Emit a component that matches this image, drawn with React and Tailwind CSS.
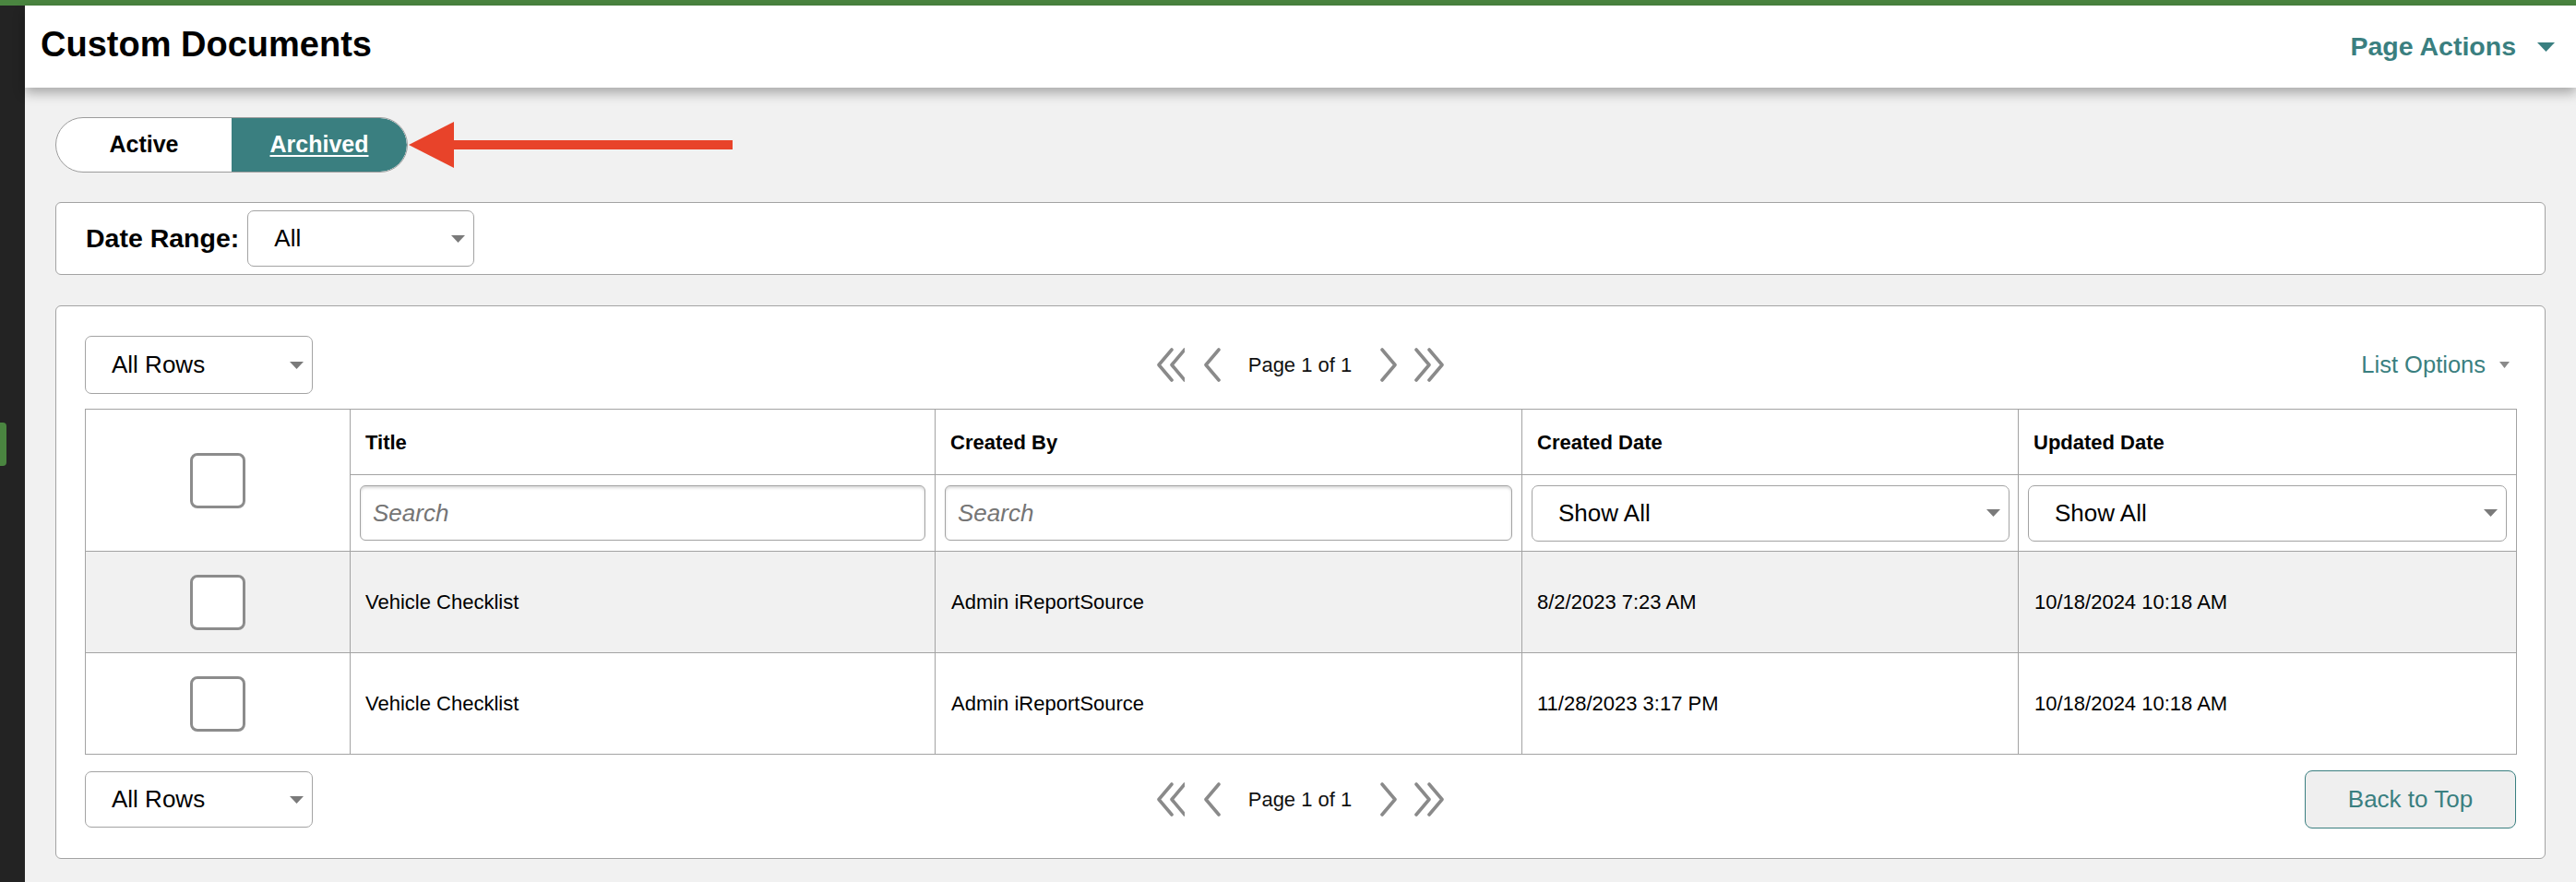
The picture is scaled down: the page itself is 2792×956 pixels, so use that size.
import React from "react";

function Caret() {
  return (
    <svg width="15" height="8" viewBox="0 0 15 8" className="shrink-0">
      <polygon points="0,0 15,0 7.5,8" fill="#7a7a7a" />
    </svg>
  );
}

function Select({ label, className }) {
  return (
    <div
      className={`flex items-center justify-between bg-white border border-[#a3a3a3] rounded-[7px] pl-[28px] pr-[9px] text-[26px] text-black ${className}`}
    >
      <span>{label}</span>
      <Caret />
    </div>
  );
}

function Checkbox() {
  return <div className="w-[60px] h-[60px] mx-auto bg-white border-[3px] border-[#8c8c8c] rounded-[8px]" />;
}

function ChevLeft() {
  return (
    <svg width="20" height="37" viewBox="0 0 20 37">
      <polyline points="17,2 3,18.5 17,35" fill="none" stroke="#8a8a8a" strokeWidth="3.6" strokeLinecap="round" strokeLinejoin="round" />
    </svg>
  );
}
function ChevRight() {
  return (
    <svg width="20" height="37" viewBox="0 0 20 37">
      <polyline points="3,2 17,18.5 3,35" fill="none" stroke="#8a8a8a" strokeWidth="3.6" strokeLinecap="round" strokeLinejoin="round" />
    </svg>
  );
}
function DblLeft() {
  return (
    <svg width="31" height="37" viewBox="0 0 31 37">
      <polyline points="17,2 3,18.5 17,35" fill="none" stroke="#8a8a8a" strokeWidth="3.6" strokeLinecap="round" strokeLinejoin="round" />
      <polyline points="31,2 17,18.5 31,35" fill="none" stroke="#8a8a8a" strokeWidth="3.6" strokeLinecap="round" strokeLinejoin="round" />
    </svg>
  );
}
function DblRight() {
  return (
    <svg width="33" height="37" viewBox="0 0 33 37">
      <polyline points="2,2 16,18.5 2,35" fill="none" stroke="#8a8a8a" strokeWidth="3.6" strokeLinecap="round" strokeLinejoin="round" />
      <polyline points="16,2 30,18.5 16,35" fill="none" stroke="#8a8a8a" strokeWidth="3.6" strokeLinecap="round" strokeLinejoin="round" />
    </svg>
  );
}

function Pagination() {
  return (
    <div className="flex items-center justify-self-center">
      <DblLeft />
      <div className="ml-[20px]">
        <ChevLeft />
      </div>
      <span className="ml-[29px] text-[22px] text-[#111]">Page 1 of 1</span>
      <div className="ml-[30px]">
        <ChevRight />
      </div>
      <div className="ml-[18px]">
        <DblRight />
      </div>
    </div>
  );
}

const rows = [
  { title: "Vehicle Checklist", by: "Admin iReportSource", created: "8/2/2023 7:23 AM", updated: "10/18/2024 10:18 AM", bg: "bg-[#f1f1f1]" },
  { title: "Vehicle Checklist", by: "Admin iReportSource", created: "11/28/2023 3:17 PM", updated: "10/18/2024 10:18 AM", bg: "bg-white" },
];

export default function App() {
  return (
    <div className="w-[2792px] h-[956px] overflow-hidden flex flex-col bg-[#f1f1f1] font-['Liberation_Sans',Arial,sans-serif] text-[#111]">
      <div className="h-[6px] shrink-0 bg-[#4a8540]" />
      <div className="flex flex-1 min-h-0">
        <aside className="w-[27px] shrink-0 bg-[#232323] pt-[452px]">
          <div className="w-[7px] h-[47px] bg-[#4a8540] rounded-r-[4px]" />
        </aside>
        <main className="flex-1 min-w-0 flex flex-col">
          <header className="relative z-10 h-[89px] shrink-0 bg-white flex items-center justify-between pl-[17px] pr-[23px] shadow-[0_6px_12px_rgba(0,0,0,0.3)]">
            <h1 className="text-[38px] font-bold leading-none mb-[5px] text-black">Custom Documents</h1>
            <div className="flex items-center text-[28.5px] font-bold text-[#3a7f80]">
              <span>Page Actions</span>
              <svg width="19" height="10" viewBox="0 0 19 10" className="ml-[23px]">
                <polygon points="0,0 19,0 9.5,10" fill="#3a7f80" />
              </svg>
            </div>
          </header>

          <div className="px-[33px] pt-[32px]">
            <div className="flex items-center">
              <div className="flex h-[60px] w-[382px] rounded-full border border-[#9c9c9c] overflow-hidden bg-white">
                <div className="flex-1 flex items-center justify-center text-[25px] font-bold text-black">Active</div>
                <div className="flex-1 flex items-center justify-center text-[25px] font-bold text-white underline underline-offset-[3px] bg-[#3a7f80] rounded-r-full">
                  Archived
                </div>
              </div>
              <svg width="352" height="50" viewBox="0 0 352 50" className="ml-[1px]">
                <polygon points="0,25 49,0 49,50" fill="#e8432a" />
                <rect x="45" y="20" width="306" height="10" fill="#e8432a" />
              </svg>
            </div>

            <div className="mt-[32px] h-[79px] bg-white border border-[#a3a3a3] rounded-[6px] flex items-center pl-[32px]">
              <span className="text-[28.5px] font-bold text-black">Date Range:</span>
              <Select label="All" className="ml-[9px] w-[246px] h-[61px]" />
            </div>

            <div className="mt-[33px] bg-white border border-[#a3a3a3] rounded-[6px] px-[31px] pt-[32px] pb-[32px]">
              <div className="grid grid-cols-[1fr_auto_1fr] items-center h-[63px]">
                <Select label="All Rows" className="w-[247px] h-[63px]" />
                <Pagination />
                <div className="flex justify-end items-center pr-[7px]">
                  <span className="text-[25.5px] text-[#3a7f80]">List Options</span>
                  <svg width="11" height="7" viewBox="0 0 11 7" className="ml-[15px]">
                    <polygon points="0,0 11,0 5.5,7" fill="#8a8a8a" />
                  </svg>
                </div>
              </div>

              <table className="mt-[16px] w-[2635px] table-fixed border-collapse border border-[#a3a3a3]">
                <colgroup>
                  <col className="w-[287px]" />
                  <col className="w-[634px]" />
                  <col className="w-[636px]" />
                  <col className="w-[538px]" />
                  <col className="w-[540px]" />
                </colgroup>
                <thead>
                  <tr className="h-[71px]">
                    <th rowSpan={2} className="border border-[#a3a3a3] align-middle">
                      <Checkbox />
                    </th>
                    <th className="border border-[#a3a3a3] text-left pl-[16px] text-[22px] font-bold text-black">Title</th>
                    <th className="border border-[#a3a3a3] text-left pl-[16px] text-[22px] font-bold text-black">Created By</th>
                    <th className="border border-[#a3a3a3] text-left pl-[16px] text-[22px] font-bold text-black">Created Date</th>
                    <th className="border border-[#a3a3a3] text-left pl-[16px] text-[22px] font-bold text-black">Updated Date</th>
                  </tr>
                  <tr className="h-[83px]">
                    <td className="border border-[#a3a3a3] px-[10px]">
                      <input
                        readOnly
                        placeholder="Search"
                        className="w-full h-[60px] bg-white border border-[#a3a3a3] rounded-[6px] pl-[13px] text-[26px] placeholder:italic placeholder:text-[#757575] shadow-[inset_0_2px_3px_rgba(0,0,0,0.15)] outline-none"
                      />
                    </td>
                    <td className="border border-[#a3a3a3] px-[10px]">
                      <input
                        readOnly
                        placeholder="Search"
                        className="w-full h-[60px] bg-white border border-[#a3a3a3] rounded-[6px] pl-[13px] text-[26px] placeholder:italic placeholder:text-[#757575] shadow-[inset_0_2px_3px_rgba(0,0,0,0.15)] outline-none"
                      />
                    </td>
                    <td className="border border-[#a3a3a3] pl-[10px] pr-[9px]">
                      <Select label="Show All" className="w-full h-[61px]" />
                    </td>
                    <td className="border border-[#a3a3a3] px-[10px]">
                      <Select label="Show All" className="w-full h-[61px]" />
                    </td>
                  </tr>
                </thead>
                <tbody>
                  {rows.map((r, i) => (
                    <tr key={i} className={`h-[110px] ${r.bg}`}>
                      <td className="border border-[#a3a3a3] align-middle">
                        <Checkbox />
                      </td>
                      <td className="border border-[#a3a3a3] pl-[16px] text-[22px] text-black">{r.title}</td>
                      <td className="border border-[#a3a3a3] pl-[17px] text-[22px] text-black">{r.by}</td>
                      <td className="border border-[#a3a3a3] pl-[16px] text-[22px] text-black">{r.created}</td>
                      <td className="border border-[#a3a3a3] pl-[17px] text-[22px] text-black">{r.updated}</td>
                    </tr>
                  ))}
                </tbody>
              </table>

              <div className="mt-[17px] grid grid-cols-[1fr_auto_1fr] items-center h-[63px]">
                <Select label="All Rows" className="w-[247px] h-[61px]" />
                <Pagination />
                <div className="flex justify-end">
                  <button className="w-[229px] h-[63px] bg-[#efefef] border border-[#3a7f80] rounded-[8px] text-[26px] text-[#3a7f80]">
                    Back to Top
                  </button>
                </div>
              </div>
            </div>
          </div>
        </main>
      </div>
    </div>
  );
}
